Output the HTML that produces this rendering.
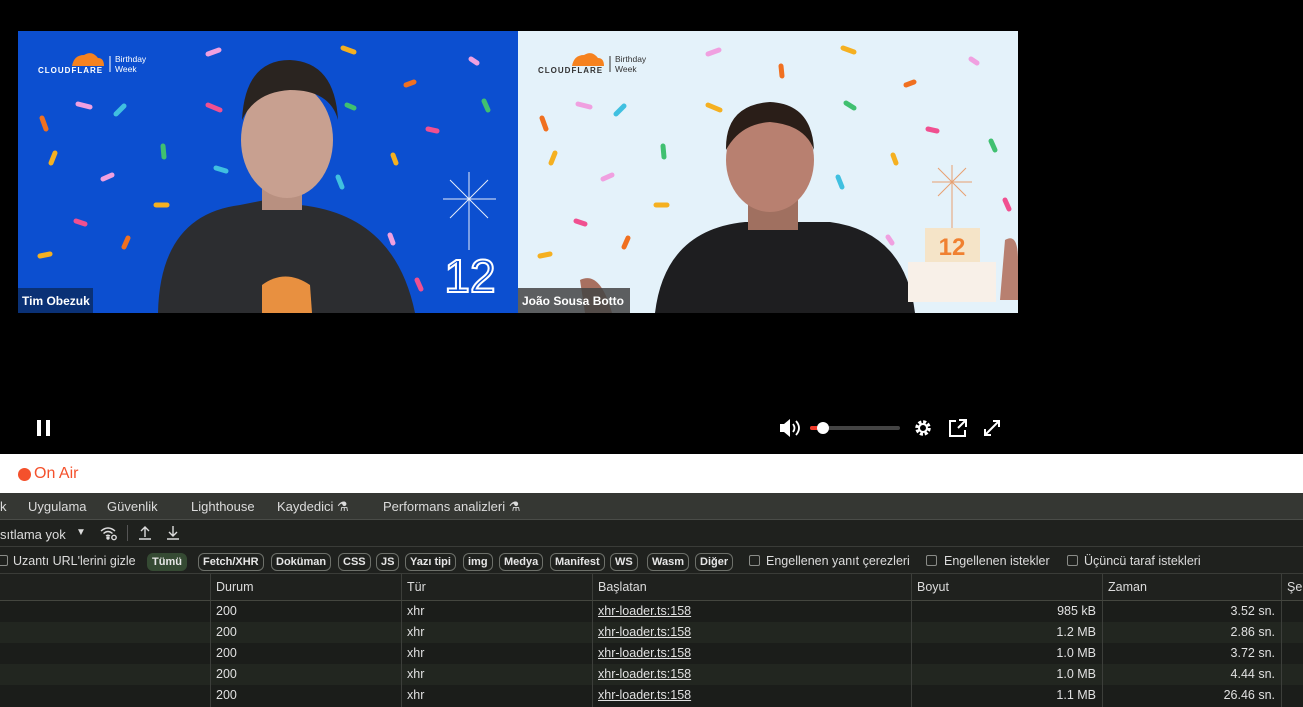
<!DOCTYPE html>
<html><head><meta charset="utf-8"><style>
*{margin:0;padding:0;box-sizing:border-box}
body{width:1303px;height:707px;overflow:hidden;background:#1b1d1a;font-family:"Liberation Sans",sans-serif;position:relative}
.abs{position:absolute}
.video{left:0;top:0;width:1303px;height:454px;background:#000}
.onair{left:0;top:454px;width:1303px;height:39px;background:#fff}
.tabs{left:0;top:493px;width:1303px;height:27px;background:#353733;border-bottom:1px solid #4a4c48;color:#dcdcdc;font-size:13px}
.tabs span{position:absolute;top:6px}
.tb{left:0;top:520px;width:1303px;height:27px;background:#1f211e;border-bottom:1px solid #3a3c38;color:#dcdcdc;font-size:13px}
.fl{left:0;top:547px;width:1303px;height:27px;background:#1f211e;border-bottom:1px solid #3a3c38;color:#dcdcdc;font-size:12.5px}
.chip{position:absolute;top:6px;height:18px;border:1px solid #6d706a;border-radius:6px;font-size:11px;font-weight:bold;line-height:16px;padding:0 4px;color:#e6e6e6}
.cb{position:absolute;top:8px;width:11px;height:11px;border:1px solid #8a8c88;border-radius:2px}
.fl .t{position:absolute;top:7px}
.hd{left:0;top:574px;width:1303px;height:27px;background:#1f211e;border-bottom:1px solid #44463f;color:#dcdcdc;font-size:12.5px}
.row{left:0;width:1303px;height:21px;color:#e0e0e0;font-size:12.5px}
.c{position:absolute;top:0;height:100%;border-left:1px solid #3c3e3a;padding-left:5px;line-height:21px}
.hd .c{line-height:27px}
.r{text-align:right;padding-right:6px}
u{text-decoration:underline}
</style></head><body>
<div class="abs video">
<svg width="1303" height="454" style="position:absolute;left:0;top:0">
<rect x="18" y="31" width="500" height="282" fill="#0c4fd0"/>
<rect x="518" y="31" width="500" height="282" fill="#e4f2fa"/>
<g stroke-linecap="round" stroke-width="5">
<line x1="208" y1="54" x2="219" y2="50" stroke="#f0a0e0"/><line x1="343" y1="48" x2="354" y2="52" stroke="#f5b020"/>
<line x1="78" y1="104" x2="90" y2="107" stroke="#f0a0e0"/><line x1="116" y1="114" x2="124" y2="106" stroke="#40c0e0"/>
<line x1="42" y1="118" x2="46" y2="129" stroke="#f07020"/><line x1="208" y1="105" x2="220" y2="110" stroke="#f05090"/>
<line x1="163" y1="146" x2="164" y2="157" stroke="#40c070"/><line x1="51" y1="163" x2="55" y2="153" stroke="#f5b020"/>
<line x1="103" y1="179" x2="112" y2="175" stroke="#f0a0e0"/><line x1="216" y1="168" x2="226" y2="171" stroke="#40c0e0"/>
<line x1="76" y1="221" x2="85" y2="224" stroke="#f05090"/><line x1="156" y1="205" x2="167" y2="205" stroke="#f5b020"/>
<line x1="124" y1="247" x2="128" y2="238" stroke="#f07020"/><line x1="40" y1="256" x2="50" y2="254" stroke="#f5b020"/>
<line x1="347" y1="105" x2="354" y2="108" stroke="#40c070"/><line x1="406" y1="85" x2="414" y2="82" stroke="#f07020"/>
<line x1="471" y1="59" x2="477" y2="63" stroke="#f0a0e0"/><line x1="484" y1="101" x2="488" y2="110" stroke="#40c070"/>
<line x1="428" y1="129" x2="437" y2="131" stroke="#f05090"/><line x1="393" y1="155" x2="396" y2="163" stroke="#f5b020"/>
<line x1="338" y1="177" x2="342" y2="187" stroke="#40c0e0"/><line x1="390" y1="235" x2="393" y2="243" stroke="#f0a0e0"/>
<line x1="417" y1="280" x2="421" y2="289" stroke="#f05090"/>
<line x1="708" y1="54" x2="719" y2="50" stroke="#f0a0e0"/><line x1="843" y1="48" x2="854" y2="52" stroke="#f5b020"/>
<line x1="578" y1="104" x2="590" y2="107" stroke="#f0a0e0"/><line x1="616" y1="114" x2="624" y2="106" stroke="#40c0e0"/>
<line x1="542" y1="118" x2="546" y2="129" stroke="#f07020"/><line x1="708" y1="105" x2="720" y2="110" stroke="#f5b020"/>
<line x1="663" y1="146" x2="664" y2="157" stroke="#40c070"/><line x1="551" y1="163" x2="555" y2="153" stroke="#f5b020"/>
<line x1="603" y1="179" x2="612" y2="175" stroke="#f0a0e0"/><line x1="656" y1="205" x2="667" y2="205" stroke="#f5b020"/>
<line x1="576" y1="221" x2="585" y2="224" stroke="#f05090"/><line x1="624" y1="247" x2="628" y2="238" stroke="#f07020"/>
<line x1="540" y1="256" x2="550" y2="254" stroke="#f5b020"/><line x1="781" y1="66" x2="782" y2="76" stroke="#f07020"/>
<line x1="846" y1="103" x2="854" y2="108" stroke="#40c070"/><line x1="906" y1="85" x2="914" y2="82" stroke="#f07020"/>
<line x1="971" y1="59" x2="977" y2="63" stroke="#f0a0e0"/><line x1="991" y1="141" x2="995" y2="150" stroke="#40c070"/>
<line x1="928" y1="129" x2="937" y2="131" stroke="#f05090"/><line x1="893" y1="155" x2="896" y2="163" stroke="#f5b020"/>
<line x1="838" y1="177" x2="842" y2="187" stroke="#40c0e0"/><line x1="888" y1="237" x2="892" y2="243" stroke="#f0a0e0"/>
<line x1="1005" y1="200" x2="1009" y2="209" stroke="#f05090"/>
</g>
<path d="M158 313 Q160 215 240 205 L265 200 L300 205 Q395 215 415 313Z" fill="#2c2d30"/>
<rect x="262" y="170" width="40" height="40" fill="#b89080"/>
<ellipse cx="287" cy="140" rx="46" ry="58" fill="#c8a090"/>
<path d="M242 120 Q245 60 290 60 Q335 62 338 120 Q330 90 290 90 Q255 92 242 120Z" fill="#2a2420"/>
<path d="M262 285 Q285 268 310 285 L312 313 L262 313Z" fill="#e89040"/>
<path d="M655 313 Q665 230 745 222 L830 222 Q905 232 915 313Z" fill="#1e1e20"/>
<rect x="748" y="185" width="50" height="45" fill="#a07060"/>
<ellipse cx="770" cy="160" rx="44" ry="52" fill="#b88070"/>
<path d="M726 150 Q725 105 770 102 Q812 104 814 150 Q805 125 770 122 Q740 124 726 150Z" fill="#2a1e18"/>
<path d="M580 280 Q600 270 612 313 L585 313Z" fill="#a87060"/>
<path d="M1005 240 Q1018 232 1018 260 L1018 300 L1000 300Z" fill="#b88070"/>
<rect x="908" y="262" width="88" height="40" fill="#f8f0e8"/>
<rect x="925" y="228" width="55" height="34" fill="#f5e4c8"/>
<text x="952" y="255" font-size="24" font-weight="bold" fill="#f08030" text-anchor="middle" font-family="Liberation Sans">12</text>
<g stroke="#e8a070" stroke-width="1"><line x1="952" y1="165" x2="952" y2="228"/><line x1="932" y1="182" x2="972" y2="182"/><line x1="938" y1="168" x2="966" y2="196"/><line x1="966" y1="168" x2="938" y2="196"/></g>
<g stroke="#ffffff" stroke-width="1" opacity=".9"><line x1="469" y1="172" x2="469" y2="250"/><line x1="443" y1="199" x2="496" y2="199"/><line x1="450" y1="180" x2="488" y2="218"/><line x1="488" y1="180" x2="450" y2="218"/></g>
<text x="470" y="292" font-size="46" fill="none" stroke="#fff" stroke-width="2" text-anchor="middle" font-family="Liberation Sans">12</text>
<path d="M72 66 Q74 55 84 55 Q92 50 98 58 Q104 58 104 66Z" fill="#f6821f"/>
<text x="38" y="73" font-size="8" font-weight="bold" fill="#fff" font-family="Liberation Sans" letter-spacing="1">CLOUDFLARE</text>
<line x1="110" y1="56" x2="110" y2="72" stroke="#fff"/>
<text x="115" y="62" font-size="8.5" fill="#fff" font-family="Liberation Sans">Birthday</text>
<text x="115" y="72" font-size="8.5" fill="#fff" font-family="Liberation Sans">Week</text>
<path d="M572 66 Q574 55 584 55 Q592 50 598 58 Q604 58 604 66Z" fill="#f6821f"/>
<text x="538" y="73" font-size="8" font-weight="bold" fill="#333" font-family="Liberation Sans" letter-spacing="1">CLOUDFLARE</text>
<line x1="610" y1="56" x2="610" y2="72" stroke="#333"/>
<text x="615" y="62" font-size="8.5" fill="#333" font-family="Liberation Sans">Birthday</text>
<text x="615" y="72" font-size="8.5" fill="#333" font-family="Liberation Sans">Week</text>
<rect x="18" y="288" width="75" height="25" fill="#0a2c66" opacity=".85"/>
<text x="22" y="305" font-size="12" font-weight="bold" fill="#fff" font-family="Liberation Sans">Tim Obezuk</text>
<rect x="518" y="288" width="112" height="25" fill="#444" opacity=".85"/>
<text x="522" y="305" font-size="12" font-weight="bold" fill="#fff" font-family="Liberation Sans">João Sousa Botto</text>
<rect x="37" y="420" width="4" height="16" fill="#fff"/><rect x="46" y="420" width="4" height="16" fill="#fff"/>
<path d="M780 424 h4 l6 -5 v18 l-6 -5 h-4z" fill="#fff"/>
<path d="M793 424 q3 4 0 8 M796 421 q6 7 0 14" stroke="#fff" stroke-width="1.8" fill="none"/>
<rect x="810" y="426" width="90" height="4" rx="2" fill="#444"/>
<rect x="810" y="426" width="13" height="4" rx="2" fill="#f03a2a"/>
<circle cx="823" cy="428" r="6" fill="#fff"/>
<circle cx="923" cy="428" r="6" fill="none" stroke="#fff" stroke-width="3.5" stroke-dasharray="3 1.7"/>
<circle cx="923" cy="428" r="4" fill="none" stroke="#fff" stroke-width="2"/>
<path d="M956 421 h-6 v15 h15 v-6 M959 420 h7 v7 M966 420 l-8 8" stroke="#fff" stroke-width="2" fill="none"/>
<path d="M985 429 v6 h6 M985 435 l7 -7 M999 427 v-6 h-6 M999 421 l-7 7" stroke="#fff" stroke-width="2" fill="none"/>
</svg>
</div>
<div class="abs onair"><div class="abs" style="left:18px;top:14px;width:13px;height:13px;border-radius:50%;background:#f4512c"></div><div class="abs" style="left:34px;top:11px;font-size:16px;color:#f4512c">On Air</div></div>
<div class="abs tabs"><span style="left:0">k</span><span style="left:28px">Uygulama</span><span style="left:107px">Güvenlik</span><span style="left:191px">Lighthouse</span><span style="left:277px">Kaydedici ⚗</span><span style="left:383px">Performans analizleri ⚗</span></div>
<div class="abs tb"><span class="abs" style="left:0;top:7px">sıtlama yok</span><span class="abs" style="left:76px;top:7px;font-size:10px">▼</span>
<svg class="abs" style="left:100px;top:5px" width="18" height="16" viewBox="0 0 18 16" fill="none" stroke="#dcdcdc" stroke-width="1.4"><path d="M1 6 Q8 0 15 6 M3.5 8.5 Q8 4.5 12.5 8.5 M6 11 Q8 9.5 10 11"/><circle cx="8" cy="13" r="1" fill="#dcdcdc"/><circle cx="14" cy="12.5" r="2.2"/></svg>
<div class="abs" style="left:127px;top:5px;width:1px;height:16px;background:#555"></div>
<svg class="abs" style="left:138px;top:5px" width="14" height="16" fill="none" stroke="#dcdcdc" stroke-width="1.4"><path d="M7 12 V2 M3 6 L7 2 L11 6 M1 14 H13"/></svg>
<svg class="abs" style="left:166px;top:5px" width="14" height="16" fill="none" stroke="#dcdcdc" stroke-width="1.4"><path d="M7 1 V11 M3 7 L7 11 L11 7 M1 14 H13"/></svg></div>
<div class="abs fl">
<div class="cb" style="left:-3px"></div><span class="t" style="left:13px">Uzantı URL'lerini gizle</span>
<div class="chip" style="left:147px;background:#354a33;border-color:#354a33">Tümü</div>
<div class="chip" style="left:198px">Fetch/XHR</div><div class="chip" style="left:271px">Doküman</div>
<div class="chip" style="left:338px">CSS</div><div class="chip" style="left:376px">JS</div>
<div class="chip" style="left:405px">Yazı tipi</div><div class="chip" style="left:463px">img</div>
<div class="chip" style="left:499px">Medya</div><div class="chip" style="left:550px">Manifest</div>
<div class="chip" style="left:610px">WS</div><div class="chip" style="left:647px">Wasm</div><div class="chip" style="left:695px">Diğer</div>
<div class="cb" style="left:749px"></div><span class="t" style="left:766px">Engellenen yanıt çerezleri</span>
<div class="cb" style="left:926px"></div><span class="t" style="left:944px">Engellenen istekler</span>
<div class="cb" style="left:1067px"></div><span class="t" style="left:1084px">Üçüncü taraf istekleri</span>
</div>
<div class="abs hd"><div class="c" style="left:210px">Durum</div><div class="c" style="left:401px">Tür</div><div class="c" style="left:592px">Başlatan</div><div class="c" style="left:911px">Boyut</div><div class="c" style="left:1102px">Zaman</div><div class="c" style="left:1281px">Şela</div></div>
<div class="abs row" style="top:601px;background:#1b1d1a"><div class="c" style="left:210px">200</div><div class="c" style="left:401px">xhr</div><div class="c" style="left:592px"><u>xhr-loader.ts:158</u></div><div class="c r" style="left:911px;width:191px">985 kB</div><div class="c r" style="left:1102px;width:179px">3.52 sn.</div><div class="c" style="left:1281px"></div></div>
<div class="abs row" style="top:622px;background:#222620"><div class="c" style="left:210px">200</div><div class="c" style="left:401px">xhr</div><div class="c" style="left:592px"><u>xhr-loader.ts:158</u></div><div class="c r" style="left:911px;width:191px">1.2 MB</div><div class="c r" style="left:1102px;width:179px">2.86 sn.</div><div class="c" style="left:1281px"></div></div>
<div class="abs row" style="top:643px;background:#1b1d1a"><div class="c" style="left:210px">200</div><div class="c" style="left:401px">xhr</div><div class="c" style="left:592px"><u>xhr-loader.ts:158</u></div><div class="c r" style="left:911px;width:191px">1.0 MB</div><div class="c r" style="left:1102px;width:179px">3.72 sn.</div><div class="c" style="left:1281px"></div></div>
<div class="abs row" style="top:664px;background:#222620"><div class="c" style="left:210px">200</div><div class="c" style="left:401px">xhr</div><div class="c" style="left:592px"><u>xhr-loader.ts:158</u></div><div class="c r" style="left:911px;width:191px">1.0 MB</div><div class="c r" style="left:1102px;width:179px">4.44 sn.</div><div class="c" style="left:1281px"></div></div>
<div class="abs row" style="top:685px;background:#1b1d1a;height:22px"><div class="c" style="left:210px">200</div><div class="c" style="left:401px">xhr</div><div class="c" style="left:592px"><u>xhr-loader.ts:158</u></div><div class="c r" style="left:911px;width:191px">1.1 MB</div><div class="c r" style="left:1102px;width:179px">26.46 sn.</div><div class="c" style="left:1281px"></div></div>
</body></html>
